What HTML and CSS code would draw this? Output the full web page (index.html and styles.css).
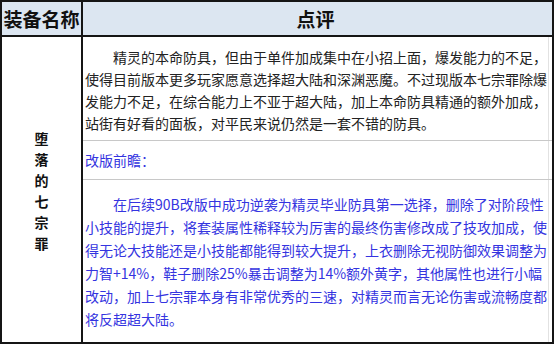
FILE: index.html
```html
<!DOCTYPE html>
<html lang="zh-CN">
<head>
<meta charset="utf-8">
<title>装备点评</title>
<link rel="stylesheet" href="styles.css">
</head>
<body>
<div class="sheet">
  <div class="head name-col">装备名称</div>
  <div class="head review-col">点评</div>
  <div class="name-cell">堕<br>落<br>的<br>七<br>宗<br>罪</div>
  <div class="review-cell">
    <p class="para first">精灵的本命防具，但由于单件加成集中在小招上面，爆发能力的不足，使得目前版本更多玩家愿意选择超大陆和深渊恶魔。不过现版本七宗罪除爆发能力不足，在综合能力上不亚于超大陆，加上本命防具精通的额外加成，站街有好看的面板，对平民来说仍然是一套不错的防具。</p>
    <p class="note">改版前瞻：</p>
    <p class="para blue">在后续90B改版中成功逆袭为精灵毕业防具第一选择，删除了对阶段性小技能的提升，将套装属性稀释较为厉害的最终伤害修改成了技攻加成，使得无论大技能还是小技能都能得到较大提升，上衣删除无视防御效果调整为力智+14%，鞋子删除25%暴击调整为14%额外黄字，其他属性也进行小幅改动，加上七宗罪本身有非常优秀的三速，对精灵而言无论伤害或流畅度都将反超超大陆。</p>
  </div>
</div>
</body>
</html>
```

FILE: styles.css
```css
html, body {
  margin: 0;
  padding: 0;
  background: #ffffff;
}

.sheet {
  box-sizing: border-box;
  width: 554px;
  height: 344px;
  border: 2px solid #151515;
  display: grid;
  grid-template-columns: 81px 1fr;
  grid-template-rows: 35px 1fr;
  font-family: "Noto Sans CJK SC", "Noto Sans", sans-serif;
  color: #222222;
}

.head {
  background: #dce6f1;
  border-bottom: 2px solid #151515;
  font-size: 19px;
  font-weight: 700;
  color: #111111;
  display: flex;
  align-items: center;
  justify-content: center;
  line-height: 1;
}

.name-col {
  border-right: 2px solid #151515;
}

.review-col {
  padding-right: 4px;
}

.name-cell {
  border-right: 2px solid #151515;
  display: flex;
  align-items: center;
  justify-content: center;
  text-align: center;
  font-size: 14px;
  font-weight: 700;
  line-height: 21px;
  color: #111111;
  padding-top: 2px;
}

.review-cell {
  display: flex;
  flex-direction: column;
  box-shadow: inset -3px 0 #ffffff, inset -4px 0 #e2e2e2;
}

.review-cell p {
  margin: 0;
  font-size: 14px;
  padding: 0 0 0 2px;
  word-break: break-all;
  line-break: anywhere;
}

.para {
  text-indent: 28px;
}

.first {
  line-height: 22px;
  padding-top: 9px !important;
  padding-bottom: 6px !important;
  border-bottom: 1px solid #c8c8c8;
}

.note {
  line-height: 22px;
  padding-top: 8px !important;
  padding-bottom: 8px !important;
  border-bottom: 1px solid #c8c8c8;
  color: #3434e0;
}

.blue {
  color: #3434e0;
  line-height: 23px;
  padding-top: 13px !important;
}
```
